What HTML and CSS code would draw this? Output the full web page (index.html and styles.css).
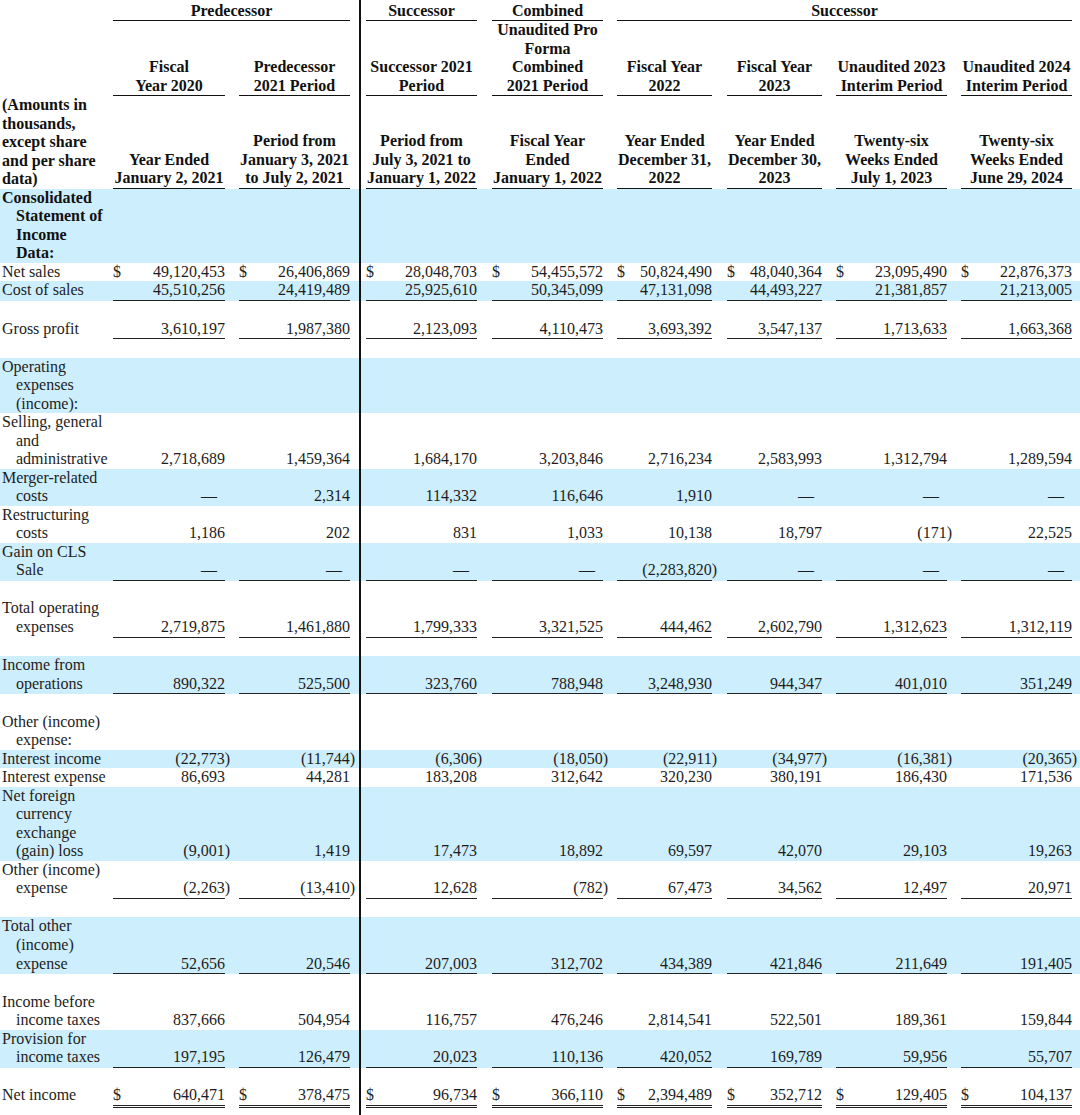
FILE: index.html
```html
<!DOCTYPE html>
<html lang="en">
<head>
<meta charset="utf-8">
<title>Selected Financial Data</title>
<link rel="stylesheet" href="styles.css">
</head>
<body>
<div class="sheet">
<table class="fin">
<colgroup>
<col class="cl"><col class="c1"><col class="c2"><col class="c3"><col class="c4"><col class="c5"><col class="c6"><col class="c7"><col class="c8">
</colgroup>
<thead>
<tr class="ha">
<th></th>
<th colspan="2" class="g-pred"><div class="h">Predecessor</div></th>
<th class="g-succ"><div class="h">Successor</div></th>
<th class="g-comb"><div class="h">Combined</div></th>
<th colspan="4" class="g-succ2"><div class="h">Successor</div></th>
</tr>
<tr class="hb">
<th></th>
<th><div class="h">Fiscal<br>Year 2020</div></th>
<th><div class="h">Predecessor<br>2021 Period</div></th>
<th><div class="h">Successor 2021<br>Period</div></th>
<th><div class="h">Unaudited Pro<br>Forma<br>Combined<br>2021 Period</div></th>
<th><div class="h">Fiscal Year<br>2022</div></th>
<th><div class="h">Fiscal Year<br>2023</div></th>
<th><div class="h">Unaudited 2023<br>Interim Period</div></th>
<th><div class="h">Unaudited 2024<br>Interim Period</div></th>
</tr>
<tr class="hc">
<th class="lab">(Amounts in thousands, except share and per share data)</th>
<th><div class="h">Year Ended<br>January 2, 2021</div></th>
<th><div class="h">Period from<br>January 3, 2021<br>to July 2, 2021</div></th>
<th><div class="h">Period from<br>July 3, 2021 to<br>January 1, 2022</div></th>
<th><div class="h">Fiscal Year<br>Ended<br>January 1, 2022</div></th>
<th><div class="h">Year Ended<br>December 31,<br>2022</div></th>
<th><div class="h">Year Ended<br>December 30,<br>2023</div></th>
<th><div class="h">Twenty-six<br>Weeks Ended<br>July 1, 2023</div></th>
<th><div class="h">Twenty-six<br>Weeks Ended<br>June 29, 2024</div></th>
</tr>
</thead>
<tbody>
<tr class="b">
<td class="l s">Consolidated Statement of Income Data:</td>
<td></td><td></td><td></td><td></td><td></td><td></td><td></td><td></td>
</tr>
<tr>
<td class="l">Net sales</td>
<td><div class="v"><span class="d">$</span>49,120,453</div></td>
<td><div class="v"><span class="d">$</span>26,406,869</div></td>
<td><div class="v"><span class="d">$</span>28,048,703</div></td>
<td><div class="v"><span class="d">$</span>54,455,572</div></td>
<td><div class="v"><span class="d">$</span>50,824,490</div></td>
<td><div class="v"><span class="d">$</span>48,040,364</div></td>
<td><div class="v"><span class="d">$</span>23,095,490</div></td>
<td><div class="v"><span class="d">$</span>22,876,373</div></td>
</tr>
<tr class="b t">
<td class="l">Cost of sales</td>
<td><div class="v">45,510,256</div></td>
<td><div class="v">24,419,489</div></td>
<td><div class="v">25,925,610</div></td>
<td><div class="v">50,345,099</div></td>
<td><div class="v">47,131,098</div></td>
<td><div class="v">44,493,227</div></td>
<td><div class="v">21,381,857</div></td>
<td><div class="v">21,213,005</div></td>
</tr>
<tr class="sp"><td colspan="9"></td></tr>
<tr class="t">
<td class="l">Gross profit</td>
<td><div class="v">3,610,197</div></td>
<td><div class="v">1,987,380</div></td>
<td><div class="v">2,123,093</div></td>
<td><div class="v">4,110,473</div></td>
<td><div class="v">3,693,392</div></td>
<td><div class="v">3,547,137</div></td>
<td><div class="v">1,713,633</div></td>
<td><div class="v">1,663,368</div></td>
</tr>
<tr class="sp"><td colspan="9"></td></tr>
<tr class="b">
<td class="l">Operating expenses (income):</td>
<td></td><td></td><td></td><td></td><td></td><td></td><td></td><td></td>
</tr>
<tr>
<td class="l">Selling, general and administrative</td>
<td><div class="v">2,718,689</div></td>
<td><div class="v">1,459,364</div></td>
<td><div class="v">1,684,170</div></td>
<td><div class="v">3,203,846</div></td>
<td><div class="v">2,716,234</div></td>
<td><div class="v">2,583,993</div></td>
<td><div class="v">1,312,794</div></td>
<td><div class="v">1,289,594</div></td>
</tr>
<tr class="b">
<td class="l">Merger-related costs</td>
<td><div class="v"><span class="da">—</span></div></td>
<td><div class="v">2,314</div></td>
<td><div class="v">114,332</div></td>
<td><div class="v">116,646</div></td>
<td><div class="v">1,910</div></td>
<td><div class="v"><span class="da">—</span></div></td>
<td><div class="v"><span class="da">—</span></div></td>
<td><div class="v"><span class="da">—</span></div></td>
</tr>
<tr>
<td class="l">Restructuring costs</td>
<td><div class="v">1,186</div></td>
<td><div class="v">202</div></td>
<td><div class="v">831</div></td>
<td><div class="v">1,033</div></td>
<td><div class="v">10,138</div></td>
<td><div class="v">18,797</div></td>
<td><div class="v"><span class="ng">(171)</span></div></td>
<td><div class="v">22,525</div></td>
</tr>
<tr class="b t">
<td class="l">Gain on CLS Sale</td>
<td><div class="v"><span class="da">—</span></div></td>
<td><div class="v"><span class="da">—</span></div></td>
<td><div class="v"><span class="da">—</span></div></td>
<td><div class="v"><span class="da">—</span></div></td>
<td><div class="v"><span class="ng">(2,283,820)</span></div></td>
<td><div class="v"><span class="da">—</span></div></td>
<td><div class="v"><span class="da">—</span></div></td>
<td><div class="v"><span class="da">—</span></div></td>
</tr>
<tr class="sp"><td colspan="9"></td></tr>
<tr class="t">
<td class="l">Total operating expenses</td>
<td><div class="v">2,719,875</div></td>
<td><div class="v">1,461,880</div></td>
<td><div class="v">1,799,333</div></td>
<td><div class="v">3,321,525</div></td>
<td><div class="v">444,462</div></td>
<td><div class="v">2,602,790</div></td>
<td><div class="v">1,312,623</div></td>
<td><div class="v">1,312,119</div></td>
</tr>
<tr class="sp"><td colspan="9"></td></tr>
<tr class="b t">
<td class="l">Income from operations</td>
<td><div class="v">890,322</div></td>
<td><div class="v">525,500</div></td>
<td><div class="v">323,760</div></td>
<td><div class="v">788,948</div></td>
<td><div class="v">3,248,930</div></td>
<td><div class="v">944,347</div></td>
<td><div class="v">401,010</div></td>
<td><div class="v">351,249</div></td>
</tr>
<tr class="sp"><td colspan="9"></td></tr>
<tr>
<td class="l">Other (income) expense:</td>
<td></td><td></td><td></td><td></td><td></td><td></td><td></td><td></td>
</tr>
<tr class="b">
<td class="l">Interest income</td>
<td><div class="v"><span class="ng">(22,773)</span></div></td>
<td><div class="v"><span class="ng">(11,744)</span></div></td>
<td><div class="v"><span class="ng">(6,306)</span></div></td>
<td><div class="v"><span class="ng">(18,050)</span></div></td>
<td><div class="v"><span class="ng">(22,911)</span></div></td>
<td><div class="v"><span class="ng">(34,977)</span></div></td>
<td><div class="v"><span class="ng">(16,381)</span></div></td>
<td><div class="v"><span class="ng">(20,365)</span></div></td>
</tr>
<tr>
<td class="l">Interest expense</td>
<td><div class="v">86,693</div></td>
<td><div class="v">44,281</div></td>
<td><div class="v">183,208</div></td>
<td><div class="v">312,642</div></td>
<td><div class="v">320,230</div></td>
<td><div class="v">380,191</div></td>
<td><div class="v">186,430</div></td>
<td><div class="v">171,536</div></td>
</tr>
<tr class="b">
<td class="l">Net foreign currency exchange (gain) loss</td>
<td><div class="v"><span class="ng">(9,001)</span></div></td>
<td><div class="v">1,419</div></td>
<td><div class="v">17,473</div></td>
<td><div class="v">18,892</div></td>
<td><div class="v">69,597</div></td>
<td><div class="v">42,070</div></td>
<td><div class="v">29,103</div></td>
<td><div class="v">19,263</div></td>
</tr>
<tr class="t">
<td class="l">Other (income) expense</td>
<td><div class="v"><span class="ng">(2,263)</span></div></td>
<td><div class="v"><span class="ng">(13,410)</span></div></td>
<td><div class="v">12,628</div></td>
<td><div class="v"><span class="ng">(782)</span></div></td>
<td><div class="v">67,473</div></td>
<td><div class="v">34,562</div></td>
<td><div class="v">12,497</div></td>
<td><div class="v">20,971</div></td>
</tr>
<tr class="sp"><td colspan="9"></td></tr>
<tr class="b t">
<td class="l">Total other (income) expense</td>
<td><div class="v">52,656</div></td>
<td><div class="v">20,546</div></td>
<td><div class="v">207,003</div></td>
<td><div class="v">312,702</div></td>
<td><div class="v">434,389</div></td>
<td><div class="v">421,846</div></td>
<td><div class="v">211,649</div></td>
<td><div class="v">191,405</div></td>
</tr>
<tr class="sp"><td colspan="9"></td></tr>
<tr>
<td class="l">Income before income taxes</td>
<td><div class="v">837,666</div></td>
<td><div class="v">504,954</div></td>
<td><div class="v">116,757</div></td>
<td><div class="v">476,246</div></td>
<td><div class="v">2,814,541</div></td>
<td><div class="v">522,501</div></td>
<td><div class="v">189,361</div></td>
<td><div class="v">159,844</div></td>
</tr>
<tr class="b t">
<td class="l">Provision for income taxes</td>
<td><div class="v">197,195</div></td>
<td><div class="v">126,479</div></td>
<td><div class="v">20,023</div></td>
<td><div class="v">110,136</div></td>
<td><div class="v">420,052</div></td>
<td><div class="v">169,789</div></td>
<td><div class="v">59,956</div></td>
<td><div class="v">55,707</div></td>
</tr>
<tr class="sp"><td colspan="9"></td></tr>
<tr class="tt">
<td class="l">Net income</td>
<td><div class="v"><span class="d">$</span>640,471</div></td>
<td><div class="v"><span class="d">$</span>378,475</div></td>
<td><div class="v"><span class="d">$</span>96,734</div></td>
<td><div class="v"><span class="d">$</span>366,110</div></td>
<td><div class="v"><span class="d">$</span>2,394,489</div></td>
<td><div class="v"><span class="d">$</span>352,712</div></td>
<td><div class="v"><span class="d">$</span>129,405</div></td>
<td><div class="v"><span class="d">$</span>104,137</div></td>
</tr>
</tbody>
</table>
</div>
</body>
</html>
```

FILE: styles.css
```css
* { box-sizing: border-box; }

html, body {
  margin: 0;
  padding: 0;
  background: #fff;
  overflow: hidden;
}

body {
  font-family: "Liberation Serif", "Times New Roman", serif;
  font-size: 16px;
  line-height: 18.53px;
  color: #1d1d1d;
}

.sheet {
  position: relative;
  width: 1080px;
  min-height: 1115px;
  padding-top: 1.5px;
}

/* vertical rule between predecessor and successor periods, drawn over the bands */
.sheet::after {
  content: "";
  position: absolute;
  left: 359px;
  top: 0;
  width: 2px;
  height: 1115px;
  background: #111;
}

.fin {
  width: 1080px;
  table-layout: fixed;
  border-collapse: separate;
  border-spacing: 0;
}

.cl { width: 113px; }
.c1 { width: 112px; }
.c2 { width: 133px; }
.c3 { width: 119px; }
.c4 { width: 126px; }
.c5 { width: 109px; }
.c6 { width: 110px; }
.c7 { width: 125px; }
.c8 { width: 133px; }

.fin th,
.fin td {
  padding: 0;
  vertical-align: bottom;
  font-weight: normal;
}

/* column gutters */
.hb > :nth-child(3), .hc > :nth-child(3), tbody tr > :nth-child(3) { padding-left: 14px; padding-right: 8px; }
.hb > :nth-child(4), .hc > :nth-child(4), tbody tr > :nth-child(4) { padding-left: 8px; }
.hb > :nth-child(5), .hc > :nth-child(5), tbody tr > :nth-child(5) { padding-left: 15px; }
.hb > :nth-child(6), .hc > :nth-child(6), tbody tr > :nth-child(6) { padding-left: 14px; }
.hb > :nth-child(7), .hc > :nth-child(7), tbody tr > :nth-child(7) { padding-left: 15px; }
.hb > :nth-child(8), .hc > :nth-child(8), tbody tr > :nth-child(8) { padding-left: 14px; }
.hb > :nth-child(9), .hc > :nth-child(9), tbody tr > :nth-child(9) { padding-left: 14px; padding-right: 8px; }

.ha .g-pred { padding-right: 8px; }
.ha .g-succ { padding-left: 8px; }
.ha .g-comb { padding-left: 15px; }
.ha .g-succ2 { padding-left: 14px; padding-right: 8px; }

.h {
  font-weight: bold;
  text-align: center;
  color: #111;
  border-bottom: 1px solid #111;
  white-space: nowrap;
}

.lab {
  text-align: left;
  font-weight: bold !important;
  color: #111;
  padding: 0 6px 0 2px !important;
}

/* row labels with hanging indent */
.l {
  padding: 0 6px 0 16px !important;
  text-indent: -14px;
}

.l.s {
  font-weight: bold;
  color: #111;
}

.b { background: #cdeefc; }

.sp td { height: 18.53px; }

.v {
  display: flex;
  justify-content: flex-end;
  align-items: baseline;
  white-space: nowrap;
}

.d { margin-right: auto; }

.ng { margin-right: -5px; }

.da { margin-right: 8px; }

.t .v { border-bottom: 1px solid #222; }
.t .l { padding-bottom: 1px !important; }

.tt .v { border-bottom: 3px double #222; }
.tt .l { padding-bottom: 3px !important; }
```
